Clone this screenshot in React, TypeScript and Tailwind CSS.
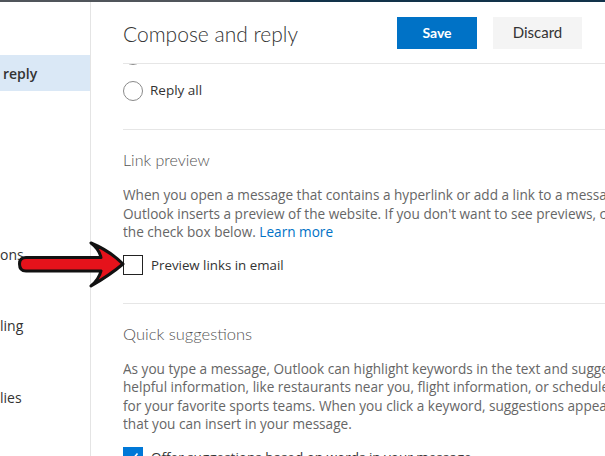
import React from "react";

const body = { fontFamily: '"Open Sans", "Noto Sans", sans-serif' };
const light = { fontFamily: 'Lato, "Open Sans", sans-serif' };

function Radio() {
  return <span className="block w-5 h-5 rounded-full border border-[#8a8a8a] bg-white shrink-0" />;
}

function Check({ checked }: { checked?: boolean }) {
  if (checked) {
    return (
      <span className="flex items-center justify-center w-5 h-5 bg-[#0078d7] shrink-0">
        <svg width="14" height="14" viewBox="0 0 14 14" fill="none">
          <path d="M2.5 7.5 L5.5 10.5 L11.5 3.5" stroke="white" strokeWidth="1.6" />
        </svg>
      </span>
    );
  }
  return <span className="block w-5 h-5 border border-[#222] bg-white shrink-0" />;
}

function Arrow() {
  return (
    <svg className="absolute left-[18px] top-[238px]" width="110" height="52" viewBox="0 0 110 52">
      <path
        d="M8 19.5 L83 19.5 Q81 11 73 5 Q92 13 105 26 Q92 37 73 48 Q81 41 83 33 L8 33 Q1.5 33 1.5 26 Q1.5 19.5 8 19.5 Z"
        fill="#e5121b"
        stroke="#111"
        strokeWidth="3"
        strokeLinejoin="round"
      />
    </svg>
  );
}

export default function App() {
  const linkLines = [
    "When you open a message that contains a hyperlink or add a link to a message in the body",
    "Outlook inserts a preview of the website. If you don't want to see previews, clear",
  ];
  const quickLines = [
    "As you type a message, Outlook can highlight keywords in the text and suggest",
    "helpful information, like restaurants near you, flight information, or schedules",
    "for your favorite sports teams. When you click a keyword, suggestions appear",
    "that you can insert in your message.",
  ];

  return (
    <div className="relative w-[605px] h-[456px] overflow-hidden bg-white text-[#333]" style={body}>
      {/* top strip */}
      <div className="flex h-[2px]">
        <div className="w-[290px] bg-[#50555b]" />
        <div className="flex-1 bg-[#12324a]" />
      </div>

      <div className="flex h-[454px]">
        {/* sidebar */}
        <div className="w-[91px] shrink-0 border-r border-[#e4e4e4] flex flex-col text-[14px] text-[#333]">
          <div className="mt-[53px] h-[36px] bg-[#dae8f6] flex items-center pl-[3px] font-semibold">reply</div>
          <div className="mt-[154px] leading-[20px]">ons</div>
          <div className="mt-[51px] leading-[20px]">ling</div>
          <div className="mt-[52px] leading-[20px]">lies</div>
        </div>

        {/* main */}
        <div className="flex-1 min-w-0 pl-8 flex flex-col">
          <div className="h-[62px] shrink-0 border-b border-[#e6e6e6] flex items-center pr-[23px]">
            <h1 className="text-[21px] font-light text-[#333] mt-[3px]" style={light}>
              Compose and reply
            </h1>
            <div className="ml-auto flex gap-4">
              <button className="w-[80px] h-[32px] bg-[#0072c6] text-white text-[14px] font-bold" style={light}>
                Save
              </button>
              <button className="w-[89px] h-[32px] bg-[#f4f4f4] text-[#333] text-[15px]" style={light}>
                Discard
              </button>
            </div>
          </div>

          <div className="flex-1 overflow-hidden flex flex-col">
            <div className="-mt-[19px]">
              <Radio />
            </div>
            <div className="mt-[15px] flex items-center gap-[7px] text-[13.5px] leading-[21px]">
              <Radio />
              <span>Reply all</span>
            </div>

            <div className="mt-[28px] border-t border-[#e6e6e6] w-[520px]" />

            <h2 className="mt-[18px] text-[16px] leading-[24px] font-light text-[#555]" style={light}>
              Link preview
            </h2>
            <div className="mt-[14px] text-[13.6px] leading-[18.5px] text-[#666] whitespace-nowrap">
              {linkLines.map((l) => (
                <div key={l}>{l}</div>
              ))}
              <div>
                the check box below. <span className="text-[#0072c6]">Learn more</span>
              </div>
            </div>
            <label className="mt-[13px] flex items-center gap-2 text-[13.3px] leading-[21px] text-[#333]">
              <Check />
              <span>Preview links in email</span>
            </label>

            <div className="mt-[27px] border-t border-[#e6e6e6] w-[520px]" />

            <h2 className="mt-[18px] text-[16.5px] leading-[24px] font-light text-[#555]" style={light}>
              Quick suggestions
            </h2>
            <div className="mt-[14px] text-[13.6px] leading-[18.6px] text-[#666] whitespace-nowrap">
              {quickLines.map((l) => (
                <div key={l}>{l}</div>
              ))}
            </div>
            <label className="mt-[13px] flex items-center gap-2 text-[13.5px] leading-[21px] text-[#333] whitespace-nowrap">
              <Check checked />
              <span>Offer suggestions based on words in your message</span>
            </label>
          </div>
        </div>
      </div>

      <Arrow />
    </div>
  );
}
